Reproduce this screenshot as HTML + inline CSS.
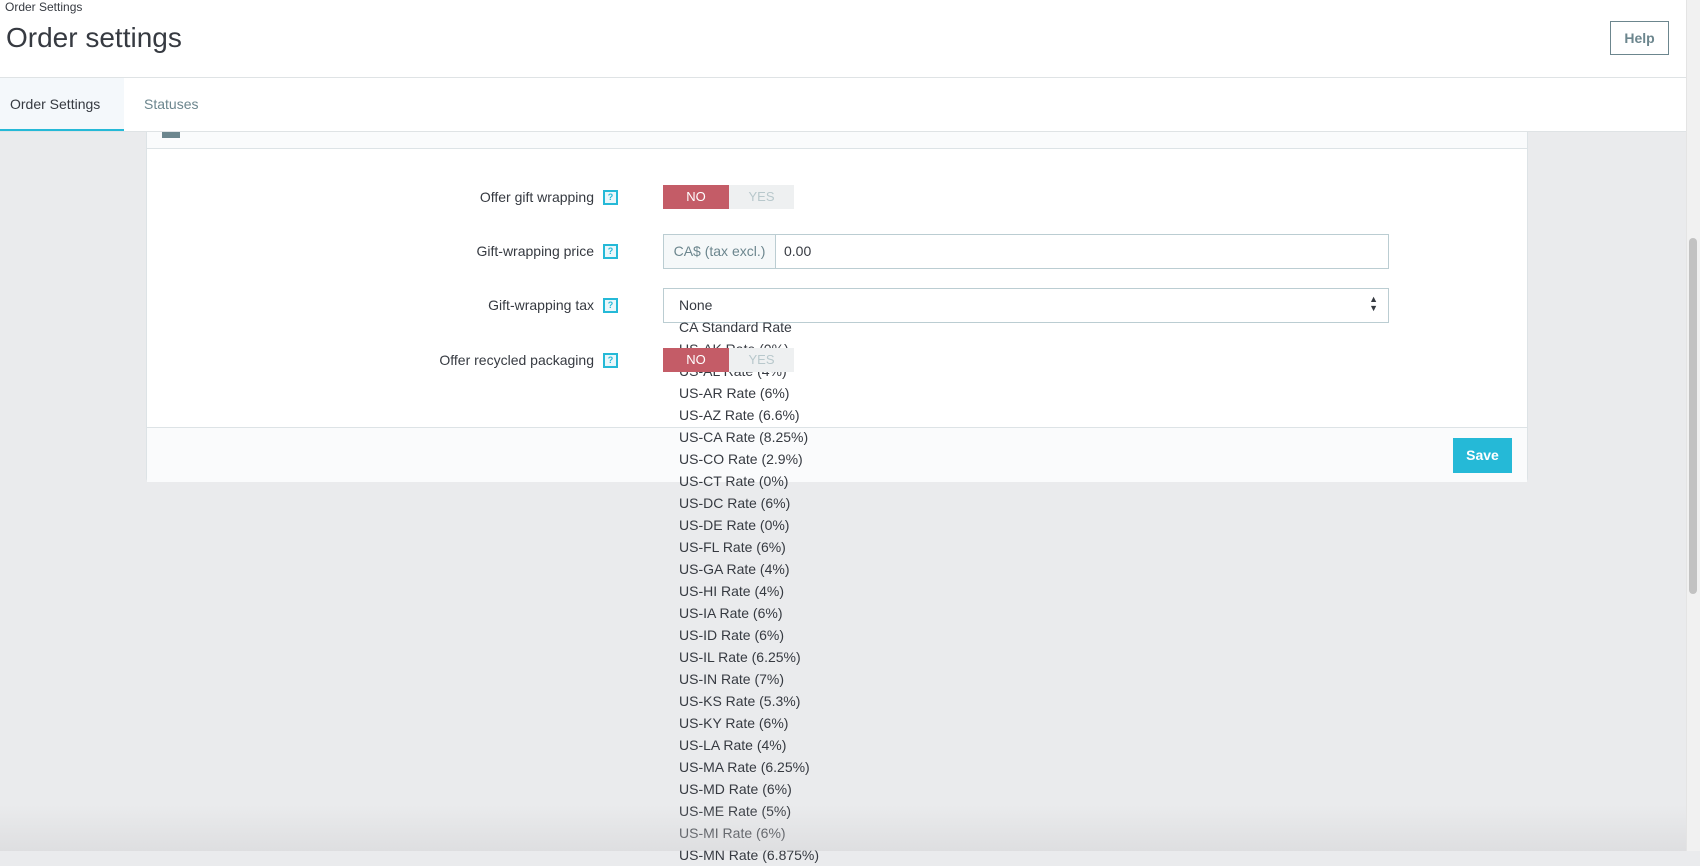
<!DOCTYPE html>
<html><head><meta charset="utf-8"><style>
*{box-sizing:border-box;margin:0;padding:0}
body{width:1700px;height:851px;overflow:hidden;background:#eaebed;font-family:"Liberation Sans",sans-serif;color:#363a41;position:relative}
.hdr{position:absolute;left:0;top:0;width:1686px;height:132px;background:#fff}
.bc{position:absolute;left:5px;top:0;font-size:12px;color:#363a41}
.title{position:absolute;left:6px;top:22px;font-size:28px;color:#363a41}
.help{position:absolute;left:1610px;top:21px;width:59px;height:34px;border:1px solid #6c868e;color:#6c868e;font-size:14px;font-weight:bold;text-align:center;line-height:32px}
.hline{position:absolute;left:0;top:77px;width:1686px;height:1px;background:#dfe3e5}
.tab1{position:absolute;left:0;top:78px;width:124px;height:54px;background:#f4f8fb;border-bottom:3px solid #25b9d7;font-size:14px;line-height:52px;padding-left:10px}
.tab2{position:absolute;left:144px;top:78px;line-height:52px;font-size:14px;color:#6c868e}
.tline{position:absolute;left:0;top:131px;width:1686px;height:1px;background:#dfe3e5}
.sb{position:absolute;left:1686px;top:0;width:14px;height:851px;background:#f1f1f1;border-left:1px solid #e4e4e4}
.thumb{position:absolute;left:1689px;top:238px;width:8px;height:356px;background:#c2c2c2;border-radius:4px}
.panel{position:absolute;left:146px;top:132px;width:1382px;height:350px;background:#fff;border:1px solid #dde3e6;border-top:none;border-radius:0 0 4px 4px}
.ph{position:absolute;left:0;top:0;width:100%;height:17px;background:#fafbfc;border-bottom:1px solid #dde3e6}
.pf{position:absolute;left:0;top:295px;width:100%;height:55px;background:#fafbfc;border-top:1px solid #dde3e6}
.ico{position:absolute;left:15px;top:0;width:18px;height:6px;background:#6c868e}
.lbl{position:absolute;right:1106px;font-size:14px;text-align:right;white-space:nowrap}
.q{position:absolute;left:603px;width:15px;height:15px;border:2px solid #25b9d7;background:#eaf7fb;color:#25b9d7;font-size:9px;font-weight:bold;text-align:center;line-height:11px}
.sw{position:absolute;left:663px;width:131px;height:24px;font-size:13px;line-height:24px;text-align:center}
.sw .n{position:absolute;left:0;top:0;width:66px;height:24px;background:#c45c67;color:#fff}
.sw .y{position:absolute;left:66px;top:0;width:65px;height:24px;background:#eef0f1;color:#b8c8cc}
.inp{position:absolute;left:663px;width:726px;height:35px;border:1px solid #bbcdd2;background:#fff;font-size:14px}
.add{position:absolute;left:0;top:0;width:112px;height:33px;background:#f5f8f9;border-right:1px solid #bbcdd2;color:#6c868e;line-height:33px;text-align:center}
.list{position:absolute;left:679px;top:316px;font-size:14px;line-height:22px;color:#363a41}
.save{position:absolute;left:1453px;top:438px;width:59px;height:35px;background:#25b9d7;color:#fff;font-weight:bold;font-size:14px;line-height:35px;text-align:center}
.fade{position:absolute;left:0;top:805px;width:1686px;height:46px;background:linear-gradient(rgba(234,235,237,0),rgba(210,210,212,.5))}
</style></head><body>
<div class="hdr"></div>
<div class="bc">Order Settings</div>
<div class="title">Order settings</div>
<div class="help">Help</div>
<div class="hline"></div>
<div class="tab1">Order Settings</div>
<div class="tab2">Statuses</div>
<div class="tline"></div>
<div class="panel"><div class="ph"><div class="ico"></div></div><div class="pf"></div></div>
<div class="lbl" style="top:189px">Offer gift wrapping</div><div class="q" style="top:190px">?</div>
<div class="sw" style="top:185px"><div class="n">NO</div><div class="y">YES</div></div>
<div class="lbl" style="top:243px">Gift-wrapping price</div><div class="q" style="top:244px">?</div>
<div class="inp" style="top:234px"><div class="add">CA$ (tax excl.)</div><span style="position:absolute;left:120px;top:8px">0.00</span></div>
<div class="lbl" style="top:297px">Gift-wrapping tax</div><div class="q" style="top:298px">?</div>
<div class="inp" style="top:288px"><span style="position:absolute;left:15px;top:8px">None</span><span style="position:absolute;right:10px;top:6px;font-size:9px;line-height:9px">▲<br>▼</span></div>
<div class="list">CA Standard Rate<br>US-AK Rate (0%)<br>US-AL Rate (4%)<br>US-AR Rate (6%)<br>US-AZ Rate (6.6%)<br>US-CA Rate (8.25%)<br>US-CO Rate (2.9%)<br>US-CT Rate (0%)<br>US-DC Rate (6%)<br>US-DE Rate (0%)<br>US-FL Rate (6%)<br>US-GA Rate (4%)<br>US-HI Rate (4%)<br>US-IA Rate (6%)<br>US-ID Rate (6%)<br>US-IL Rate (6.25%)<br>US-IN Rate (7%)<br>US-KS Rate (5.3%)<br>US-KY Rate (6%)<br>US-LA Rate (4%)<br>US-MA Rate (6.25%)<br>US-MD Rate (6%)<br>US-ME Rate (5%)<br>US-MI Rate (6%)<br>US-MN Rate (6.875%)</div>
<div class="lbl" style="top:352px">Offer recycled packaging</div><div class="q" style="top:353px">?</div>
<div class="sw" style="top:348px"><div class="n">NO</div><div class="y">YES</div></div>
<div class="save">Save</div>
<div class="fade"></div>
<div class="sb"></div><div class="thumb"></div>
</body></html>
